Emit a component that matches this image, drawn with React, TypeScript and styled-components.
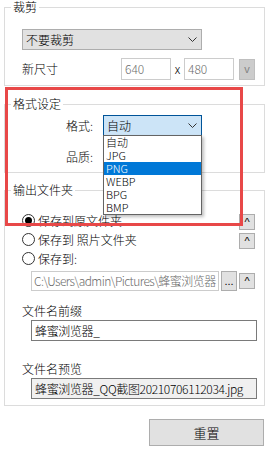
import React from 'react'
import styled, { createGlobalStyle } from 'styled-components'

const GlobalStyle = createGlobalStyle`
  html, body {
    margin: 0;
    padding: 0;
    background: #fff;
  }
  body {
    font-family: "Noto Sans CJK SC", "Noto Sans", sans-serif;
    font-size: 12px;
    font-weight: 300;
    color: #000;
  }
`

const Page = styled.div`
  position: relative;
  width: 272px;
  height: 455px;
  box-sizing: border-box;
  padding-left: 4px;
  overflow: hidden;
`

const Group = styled.fieldset<{ $top?: number }>`
  width: 261px;
  box-sizing: border-box;
  margin: ${p => p.$top ?? 0}px 0 0 0;
  padding: 0;
  min-width: 0;
  border: 1px solid #dcdcdc;
`

const Legend = styled.legend`
  margin-left: 6px;
  padding: 0 2px;
  font-size: 12px;
  line-height: 14px;
`

const GroupBody = styled.div<{ $pad: string }>`
  display: flex;
  flex-direction: column;
  padding: ${p => p.$pad};
`

const Row = styled.div<{ $h: number; $top?: number; $indent?: number }>`
  display: flex;
  align-items: center;
  height: ${p => p.$h}px;
  margin-top: ${p => p.$top ?? 0}px;
  padding-left: ${p => p.$indent ?? 0}px;
  line-height: 14px;
`

const Label = styled.span<{ $w: number; $right?: boolean }>`
  width: ${p => p.$w}px;
  flex-shrink: 0;
  text-align: ${p => (p.$right ? 'right' : 'left')};
  margin-right: ${p => (p.$right ? 10 : 0)}px;
`

const Combo = styled.div<{ $w: number; $focus?: boolean }>`
  position: relative;
  box-sizing: border-box;
  width: ${p => p.$w}px;
  height: 21px;
  display: flex;
  align-items: center;
  justify-content: space-between;
  padding: 0 4px 0 3px;
  border: 1px solid ${p => (p.$focus ? '#005499' : '#adadad')};
  background: ${p => (p.$focus ? '#cce4f7' : '#e1e1e1')};
  line-height: 14px;
`

const NumBox = styled.div`
  box-sizing: border-box;
  width: 50px;
  height: 22px;
  padding: 0 3px;
  display: flex;
  align-items: center;
  border: 1px solid #cccccc;
  color: #6d6d6d;
`

const Times = styled.span`
  width: 13px;
  text-align: center;
`

const SmallButton = styled.div<{ $h?: number; $off?: boolean; $gap?: number; $top?: number }>`
  box-sizing: border-box;
  width: 16px;
  height: ${p => p.$h ?? 16}px;
  margin-left: ${p => p.$gap ?? 0}px;
  margin-top: ${p => p.$top ?? 0}px;
  flex-shrink: 0;
  display: flex;
  align-items: center;
  justify-content: center;
  border: 1px solid ${p => (p.$off ? '#bfbfbf' : '#adadad')};
  background: ${p => (p.$off ? '#cccccc' : '#e1e1e1')};
  color: ${p => (p.$off ? '#838383' : '#000')};
  font-family: "Liberation Sans", Arial, sans-serif;
  font-size: 11px;
`

const List = styled.div`
  position: absolute;
  left: -1px;
  top: 100%;
  width: 99px;
  box-sizing: border-box;
  border: 1px solid #646464;
  background: #fff;
  box-shadow: 2px 2px 3px rgba(0, 0, 0, 0.25);
  z-index: 10;
`

const Option = styled.div<{ $active?: boolean }>`
  height: 13px;
  line-height: 13px;
  padding-left: 2px;
  font-size: 11px;
  background: ${p => (p.$active ? '#0078d7' : 'transparent')};
  color: ${p => (p.$active ? '#fff' : '#000')};
`

const RadioCircle = styled.span<{ $on?: boolean }>`
  box-sizing: border-box;
  width: 13px;
  height: 13px;
  border-radius: 50%;
  border: 1px solid #333;
  flex-shrink: 0;
  display: flex;
  align-items: center;
  justify-content: center;
  &::after {
    content: '';
    width: 7px;
    height: 7px;
    border-radius: 50%;
    background: ${p => (p.$on ? '#000' : 'transparent')};
  }
`

const RadioText = styled.span`
  flex: 1;
  margin-left: 3px;
  white-space: nowrap;
`

const PathBox = styled.div`
  box-sizing: border-box;
  width: 190px;
  height: 20px;
  padding: 0 2px;
  display: flex;
  align-items: center;
  border: 1px solid #cccccc;
  color: #6d6d6d;
  letter-spacing: -0.55px;
  white-space: nowrap;
  overflow: hidden;
`

const FieldLabel = styled.div<{ $top: number }>`
  margin-top: ${p => p.$top}px;
  padding-left: 17px;
  line-height: 14px;
`

const TextBox = styled.div<{ $readonly?: boolean }>`
  box-sizing: border-box;
  width: 226px;
  height: 21px;
  margin: 2px 0 0 26px;
  padding: 0 3px;
  display: flex;
  align-items: center;
  border: 1px solid #7a7a7a;
  background: ${p => (p.$readonly ? '#f0f0f0' : '#fff')};
  letter-spacing: -0.35px;
  white-space: nowrap;
  overflow: hidden;
`

const Footer = styled.div`
  width: 261px;
  display: flex;
  justify-content: flex-end;
  margin-top: 13px;
  padding-right: 1px;
  box-sizing: border-box;
`

const Button = styled.div`
  box-sizing: border-box;
  width: 115px;
  height: 27px;
  display: flex;
  align-items: center;
  justify-content: center;
  border: 1px solid #adadad;
  background: #e1e1e1;
  font-size: 13px;
`

const Highlight = styled.div`
  position: absolute;
  left: 5px;
  top: 87px;
  width: 238px;
  height: 139px;
  box-sizing: border-box;
  border: 3px solid #e84848;
  pointer-events: none;
  z-index: 20;
`

const Chevron = () => (
  <svg width="9" height="5" viewBox="0 0 9 5">
    <polyline points="0.5,0.5 4.5,4.5 8.5,0.5" fill="none" stroke="#333" strokeWidth="1" />
  </svg>
)

const formats = ['自动', 'JPG', 'PNG', 'WEBP', 'BPG', 'BMP']

const App = () => (
  <Page>
    <GlobalStyle />
    <Group>
      <Legend>裁剪</Legend>
      <GroupBody $pad="15px 9px 5px 17px">
        <Combo $w={180}>
          <span>不要裁剪</span>
          <Chevron />
        </Combo>
        <Row $h={22} $top={8}>
          <Label $w={99}>新尺寸</Label>
          <NumBox>640</NumBox>
          <Times>x</Times>
          <NumBox>480</NumBox>
          <SmallButton $off $h={21} $gap={5}>v</SmallButton>
        </Row>
      </GroupBody>
    </Group>

    <Group $top={11}>
      <Legend>格式设定</Legend>
      <GroupBody $pad="4px 0 5px 0">
        <Row $h={21}>
          <Label $w={88} $right>格式:</Label>
          <Combo $w={99} $focus>
            <span>自动</span>
            <Chevron />
            <List>
              {formats.map(f => (
                <Option key={f} $active={f === 'PNG'}>{f}</Option>
              ))}
            </List>
          </Combo>
        </Row>
        <Row $h={21} $top={10}>
          <Label $w={88} $right>品质:</Label>
        </Row>
      </GroupBody>
    </Group>

    <Group $top={10}>
      <Legend>输出文件夹</Legend>
      <GroupBody $pad="14px 9px 6px 0">
        <Row $h={19} $indent={17}>
          <RadioCircle $on />
          <RadioText>保存到原文件夹</RadioText>
          <SmallButton $top={3}>^</SmallButton>
        </Row>
        <Row $h={19} $indent={17}>
          <RadioCircle />
          <RadioText>保存到 照片文件夹</RadioText>
          <SmallButton $top={3}>^</SmallButton>
        </Row>
        <Row $h={19} $indent={17}>
          <RadioCircle />
          <RadioText>保存到:</RadioText>
        </Row>
        <Row $h={20} $top={3} $indent={26}>
          <PathBox>C:\Users\admin\Pictures\蜂蜜浏览器</PathBox>
          <SmallButton $h={20} $gap={2}>...</SmallButton>
          <SmallButton $gap={2}>^</SmallButton>
        </Row>
        <FieldLabel $top={13}>文件名前缀</FieldLabel>
        <TextBox>蜂蜜浏览器_</TextBox>
        <FieldLabel $top={21}>文件名预览</FieldLabel>
        <TextBox $readonly>蜂蜜浏览器_QQ截图20210706112034.jpg</TextBox>
      </GroupBody>
    </Group>

    <Footer>
      <Button>重置</Button>
    </Footer>

    <Highlight />
  </Page>
)

export default App
